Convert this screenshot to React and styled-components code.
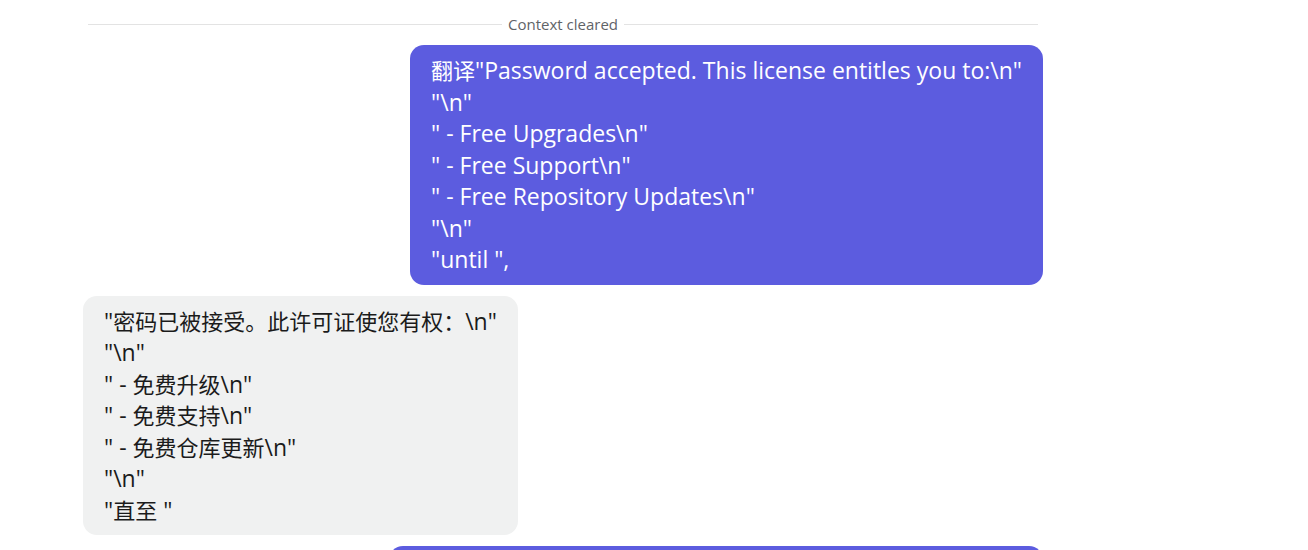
import React from 'react';
import styled, { createGlobalStyle } from 'styled-components';

const GlobalStyle = createGlobalStyle`
  body {
    margin: 0;
    background: #ffffff;
    font-family: "Open Sans", "Noto Sans CJK SC", sans-serif;
    overflow: hidden;
  }
`;

const Chat = styled.div`
  width: 960px;
  margin-left: 83px;
  padding-top: 14px;
  display: flex;
  flex-direction: column;
  gap: 11px;
`;

const Divider = styled.div`
  display: flex;
  align-items: center;
  gap: 6px;
  margin: 0 5px;
  height: 20px;
  color: #5f6368;
  font-size: 15px;

  &::before,
  &::after {
    content: '';
    flex: 1;
    height: 1px;
    background: #e3e3e3;
  }
`;

const Bubble = styled.div`
  align-self: ${(p) => (p.$mine ? 'flex-end' : 'flex-start')};
  background: ${(p) => (p.$mine ? '#5c5cdf' : '#f0f1f1')};
  color: ${(p) => (p.$mine ? '#ffffff' : '#1b1b1b')};
  border-radius: 14px;
  padding: 10px 21px 9px;
  font-size: 23px;
  line-height: 31.5px;
  white-space: pre-wrap;
`;

// Han characters sit slightly smaller than the latin text
const Han = styled.span`
  font-family: "Noto Sans CJK SC", sans-serif;
  font-size: 22px;
  line-height: 1;
`;

const renderText = (text) =>
  text.split(/([\u3000-\u303f\u4e00-\u9fff\uff00-\uffef]+)/).map((part, i) =>
    i % 2 ? <Han key={i}>{part}</Han> : part
  );

const messages = [
  {
    mine: true,
    text: '翻译"Password accepted. This license entitles you to:\\n"\n"\\n"\n" - Free Upgrades\\n"\n" - Free Support\\n"\n" - Free Repository Updates\\n"\n"\\n"\n"until ",',
  },
  {
    mine: false,
    text: '"密码已被接受。此许可证使您有权：\\n"\n"\\n"\n" - 免费升级\\n"\n" - 免费支持\\n"\n" - 免费仓库更新\\n"\n"\\n"\n"直至 "',
  },
  {
    mine: true,
    text: '翻译"Your license has expired. Please renew to continue."',
  },
];

export default function App() {
  return (
    <>
      <GlobalStyle />
      <Chat>
        <Divider>Context cleared</Divider>
        {messages.map((m, i) => (
          <Bubble key={i} $mine={m.mine}>
            {renderText(m.text)}
          </Bubble>
        ))}
      </Chat>
    </>
  );
}
